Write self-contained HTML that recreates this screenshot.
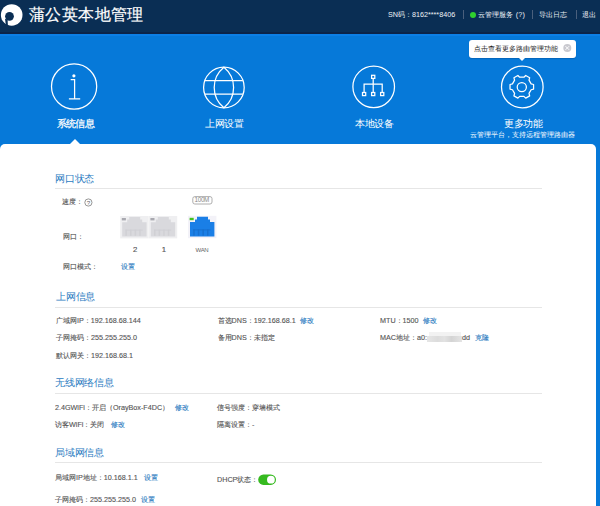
<!DOCTYPE html>
<html><head><meta charset="utf-8">
<style>
*{margin:0;padding:0;box-sizing:border-box}
html,body{width:600px;height:506px;overflow:hidden}
body{background:#0679d9;font-family:"Liberation Sans",sans-serif;position:relative}
.a{position:absolute;white-space:nowrap;line-height:1}
#hdr{position:absolute;left:0;top:0;width:600px;height:33.5px;background:#0a2e54}
#panel{position:absolute;left:0;top:144px;width:596px;height:400px;background:#fff;border-radius:5px 5px 0 0}
.w{color:#fff}
.t{color:#2b7bc1;font-size:9.6px;letter-spacing:-0.2px}
.g{color:#555;font-size:7.2px;-webkit-text-stroke:0.12px #555}
.l{color:#2b7bc1!important;-webkit-text-stroke-color:#2b7bc1!important}
.hr{position:absolute;left:55px;width:487px;height:1px;background:#e6e6e6}
.sep{position:absolute;width:1px;height:9px;background:#4a5f7c;top:10px}
</style></head><body>
<div id="hdr"></div>
<div class="a" style="left:0;top:31.8px;width:600px;height:1.8px;background:#0b2449"></div>
<div class="a" style="left:0;top:33.5px;width:600px;height:2px;background:#0c7fe6"></div>
<!-- logo -->
<svg class="a" style="left:0;top:0" width="28" height="30" viewBox="0 0 28 30">
<circle cx="11.7" cy="14.95" r="10.8" fill="#fff"/>
<circle cx="9.5" cy="16.35" r="4.4" fill="#0a2e54"/>
<path d="M5 18.8L7.6 19.6L7.9 26.5L6 26.5Z" fill="#0a2e54"/>
</svg>
<div class="a w" style="left:29px;top:6.3px;font-size:16.2px;letter-spacing:0.4px;-webkit-text-stroke:0.2px #fff">蒲公英本地管理</div>
<div class="a w" style="left:388px;top:11px;font-size:7.2px;color:#eef2f6">SN码：8162****8406</div>
<div class="sep" style="left:463px"></div>
<div class="a" style="left:469.5px;top:12px;width:6px;height:6px;border-radius:50%;background:#2fd12f"></div>
<div class="a w" style="left:477.5px;top:11.4px;font-size:7.25px;letter-spacing:0.2px;color:#eef2f6">云管理服务 (?)</div>
<div class="sep" style="left:532px"></div>
<div class="a w" style="left:538.9px;top:11.4px;font-size:7.3px;color:#eef2f6">导出日志</div>
<div class="sep" style="left:576px"></div>
<div class="a w" style="left:582.2px;top:11.4px;font-size:7.3px;color:#eef2f6">退出</div>

<!-- nav icons -->
<svg class="a" style="left:0;top:0" width="600" height="145" viewBox="0 0 600 145">
<g fill="none" stroke="#fff" stroke-width="1.25">
<circle cx="74.1" cy="86.5" r="22.6"/>
<path d="M70.7 79.6H74.6V98.9M68.9 98.9H80.2"/>
<circle cx="223.9" cy="87.5" r="20.3"/>
<path d="M223.9 67.2C218 72 214.2 80 214.2 87.5C214.2 95 218 103 223.9 107.8C229.8 103 233.6 95 233.6 87.5C233.6 80 229.8 72 223.9 67.2Z"/>
<path d="M205 80.5H242.8M205 94.2H242.8"/>
<circle cx="373.7" cy="86.8" r="20.8"/>
<rect x="371.6" y="75.3" width="3.2" height="3.1"/>
<path d="M373.2 78.4V92.5M364.1 92.5V84H382.2V92.5"/>
<rect x="362.5" y="92.5" width="3.2" height="3.1"/>
<rect x="371.6" y="92.5" width="3.2" height="3.1"/>
<rect x="380.6" y="92.5" width="3.2" height="3.1"/>
<circle cx="522.3" cy="87" r="20.8"/>
<path d="M531.15 83.87 L533.58 84.51 L533.58 89.09 L531.15 89.73 L529.01 93.43 L529.67 95.86 L525.71 98.15 L523.94 96.36 L519.66 96.36 L517.89 98.15 L513.93 95.86 L514.59 93.43 L512.45 89.73 L510.02 89.09 L510.02 84.51 L512.45 83.87 L514.59 80.17 L513.93 77.74 L517.89 75.45 L519.66 77.24 L523.94 77.24 L525.71 75.45 L529.67 77.74 L529.01 80.17Z" stroke-linejoin="round"/>
<circle cx="521.8" cy="87.1" r="4.6"/>
</g>
<circle cx="73.9" cy="75.8" r="1.6" fill="#fff"/>
</svg>
<div class="a w" style="left:56.6px;top:119.3px;font-size:9.5px;letter-spacing:-0.55px;-webkit-text-stroke:0.25px #fff">系统信息</div>
<div class="a w" style="left:205px;top:119.2px;font-size:9.5px;letter-spacing:-0.45px">上网设置</div>
<div class="a w" style="left:355px;top:119.1px;font-size:9.5px;letter-spacing:-0.45px">本地设备</div>
<div class="a w" style="left:504.4px;top:118.8px;font-size:9.5px;letter-spacing:-0.45px">更多功能</div>
<div class="a w" style="left:469.8px;top:132.2px;font-size:7.1px">云管理平台，支持远程管理路由器</div>

<!-- tooltip -->
<div class="a" style="left:469px;top:40px;width:106.5px;height:17.7px;background:#fff;border-radius:3px;box-shadow:0 1px 1px rgba(0,40,100,.25)"></div>
<div class="a" style="left:518.5px;top:57.5px;width:0;height:0;border-left:3.5px solid transparent;border-right:3.5px solid transparent;border-top:3.7px solid #fff"></div>
<div class="a" style="left:473.8px;top:45.2px;font-size:7.2px;color:#222">点击查看更多路由管理功能</div>
<svg class="a" style="left:562px;top:43px" width="11" height="11" viewBox="0 0 11 11"><circle cx="5.3" cy="5" r="4" fill="#c9c9cf"/><path d="M3.5 3.2L7.1 6.8M7.1 3.2L3.5 6.8" stroke="#fff" stroke-width="1"/></svg>

<div id="panel"></div>
<div class="a" style="left:69.6px;top:139px;width:0;height:0;border-left:5.2px solid transparent;border-right:5.2px solid transparent;border-bottom:5.2px solid #fff"></div>

<!-- section 1 -->
<svg class="a" style="left:0;top:0" width="600" height="260" viewBox="0 0 600 260"><g transform="translate(120.2 216)">
<rect x="0" y="0" width="28.4" height="22.4" fill="#efeff1"/>
<path d="M9 1H20V3.6H22V6.2H26.4V20.6H2V6.2H7V3.6H9Z" fill="#d9d9dd"/>
<g fill="#d0d0d4"><rect x="5.2" y="13.6" width="1.5" height="6.2"/><rect x="9.8" y="13.6" width="1.5" height="6.2"/><rect x="14.4" y="13.6" width="1.5" height="6.2"/><rect x="19.0" y="13.6" width="1.5" height="6.2"/><rect x="5.2" y="13.6" width="17.3" height="1"/></g>
<rect x="1.6" y="2" width="4.1" height="2.4" fill="#a9a9b0"/>
</g><g transform="translate(148.8 216)">
<rect x="0" y="0" width="28.4" height="22.4" fill="#efeff1"/>
<path d="M9 1H20V3.6H22V6.2H26.4V20.6H2V6.2H7V3.6H9Z" fill="#d9d9dd"/>
<g fill="#d0d0d4"><rect x="5.2" y="13.6" width="1.5" height="6.2"/><rect x="9.8" y="13.6" width="1.5" height="6.2"/><rect x="14.4" y="13.6" width="1.5" height="6.2"/><rect x="19.0" y="13.6" width="1.5" height="6.2"/><rect x="5.2" y="13.6" width="17.3" height="1"/></g>
<rect x="1.6" y="2" width="4.1" height="2.4" fill="#a9a9b0"/>
</g><g transform="translate(188 215.8)">
<rect x="0" y="0" width="28.4" height="22.4" fill="#f3f2f8"/>
<path d="M9 1H20V3.6H22V6.2H26.4V20.6H2V6.2H7V3.6H9Z" fill="#1a7fe6"/>
<g fill="#1670d0"><rect x="5.2" y="13.6" width="1.5" height="6.2"/><rect x="9.8" y="13.6" width="1.5" height="6.2"/><rect x="14.4" y="13.6" width="1.5" height="6.2"/><rect x="19.0" y="13.6" width="1.5" height="6.2"/><rect x="5.2" y="13.6" width="17.3" height="1"/></g>
<rect x="1.6" y="2" width="4.1" height="2.4" fill="#44c21e"/>
</g><circle cx="88.4" cy="202.5" r="3.6" fill="none" stroke="#8a8a8a" stroke-width="0.9"/><rect x="192.8" y="196.6" width="19.2" height="7.4" rx="2" fill="none" stroke="#a5a5a5" stroke-width="0.9"/></svg>
<div class="a" style="left:86.8px;top:199.6px;font-size:6.2px;color:#666">?</div>
<div class="a" style="left:194.5px;top:197.0px;font-size:6.3px;color:#888;letter-spacing:-0.3px">100M</div>
<div class="a" style="left:132.9px;top:245.6px;font-size:7.8px;color:#555;-webkit-text-stroke:0.15px #555">2</div>
<div class="a" style="left:161.7px;top:245.6px;font-size:7.8px;color:#555;-webkit-text-stroke:0.15px #555">1</div>
<div class="a" style="left:195.5px;top:246.8px;font-size:6px;color:#666;letter-spacing:-0.3px">WAN</div>
<div class="a t" style="left:55px;top:173.8px">网口状态</div>
<div class="hr" style="top:188px"></div>
<div class="a g" style="left:62.2px;top:198.3px">速度：</div>
<div class="a g" style="left:63px;top:232.9px">网口：</div>
<div class="a g" style="left:63px;top:263.4px">网口模式：</div>
<div class="a g l" style="left:120.8px;top:263.4px">设置</div>

<!-- section 2 -->
<div class="a t" style="left:56px;top:292.1px">上网信息</div>
<div class="hr" style="top:307px"></div>
<div class="a g" style="left:56px;top:316.7px">广域网IP：192.168.68.144</div>
<div class="a g" style="left:56px;top:334.4px">子网掩码：255.255.255.0</div>
<div class="a g" style="left:56px;top:352.3px">默认网关：192.168.68.1</div>
<div class="a g" style="left:217.5px;top:316.7px">首选DNS：192.168.68.1</div>
<div class="a g l" style="left:300px;top:316.7px">修改</div>
<div class="a g" style="left:217.5px;top:334.4px">备用DNS：未指定</div>
<div class="a g" style="left:380px;top:316.7px">MTU：1500</div>
<div class="a g l" style="left:422.5px;top:316.7px">修改</div>
<div class="a g" style="left:380px;top:334.4px">MAC地址：a0:</div>
<div class="a" style="left:429px;top:331.5px;width:32px;height:4.5px;background:#f2f2f2"></div>
<div class="a" style="left:427px;top:335.8px;width:34.5px;height:6px;background:linear-gradient(90deg,#e6e6e6,#dcdcdc 30%,#e2e2e2 50%,#d4d4d4 70%,#e4e4e4)"></div>
<div class="a g" style="left:462px;top:334.4px">dd</div>
<div class="a g l" style="left:475px;top:334.4px">克隆</div>

<!-- section 3 -->
<div class="a t" style="left:55px;top:378.1px">无线网络信息</div>
<div class="hr" style="top:393px"></div>
<div class="a g" style="left:55px;top:403.8px">2.4GWiFi：开启（OrayBox-F4DC）</div>
<div class="a g l" style="left:174.5px;top:403.8px">修改</div>
<div class="a g" style="left:55px;top:421px">访客WiFi：关闭</div>
<div class="a g l" style="left:110.5px;top:421px">修改</div>
<div class="a g" style="left:217px;top:403.5px">信号强度：穿墙模式</div>
<div class="a g" style="left:217px;top:421.4px">隔离设置：-</div>

<!-- section 4 -->
<div class="a t" style="left:55px;top:447.7px">局域网信息</div>
<div class="hr" style="top:462px"></div>
<div class="a g" style="left:55px;top:473.7px">局域网IP地址：10.168.1.1</div>
<div class="a g l" style="left:143.75px;top:473.7px">设置</div>
<div class="a g" style="left:55px;top:495.8px">子网掩码：255.255.255.0</div>
<div class="a g l" style="left:141.25px;top:495.8px">设置</div>
<div class="a g" style="left:217px;top:475.5px">DHCP状态：</div>
<svg class="a" style="left:257px;top:473px" width="22" height="14" viewBox="0 0 22 14"><rect x="1.2" y="1.4" width="17.8" height="10.5" rx="5.25" fill="#36ba20"/><circle cx="13.9" cy="6.65" r="3.9" fill="#fff"/></svg>

</body></html>
